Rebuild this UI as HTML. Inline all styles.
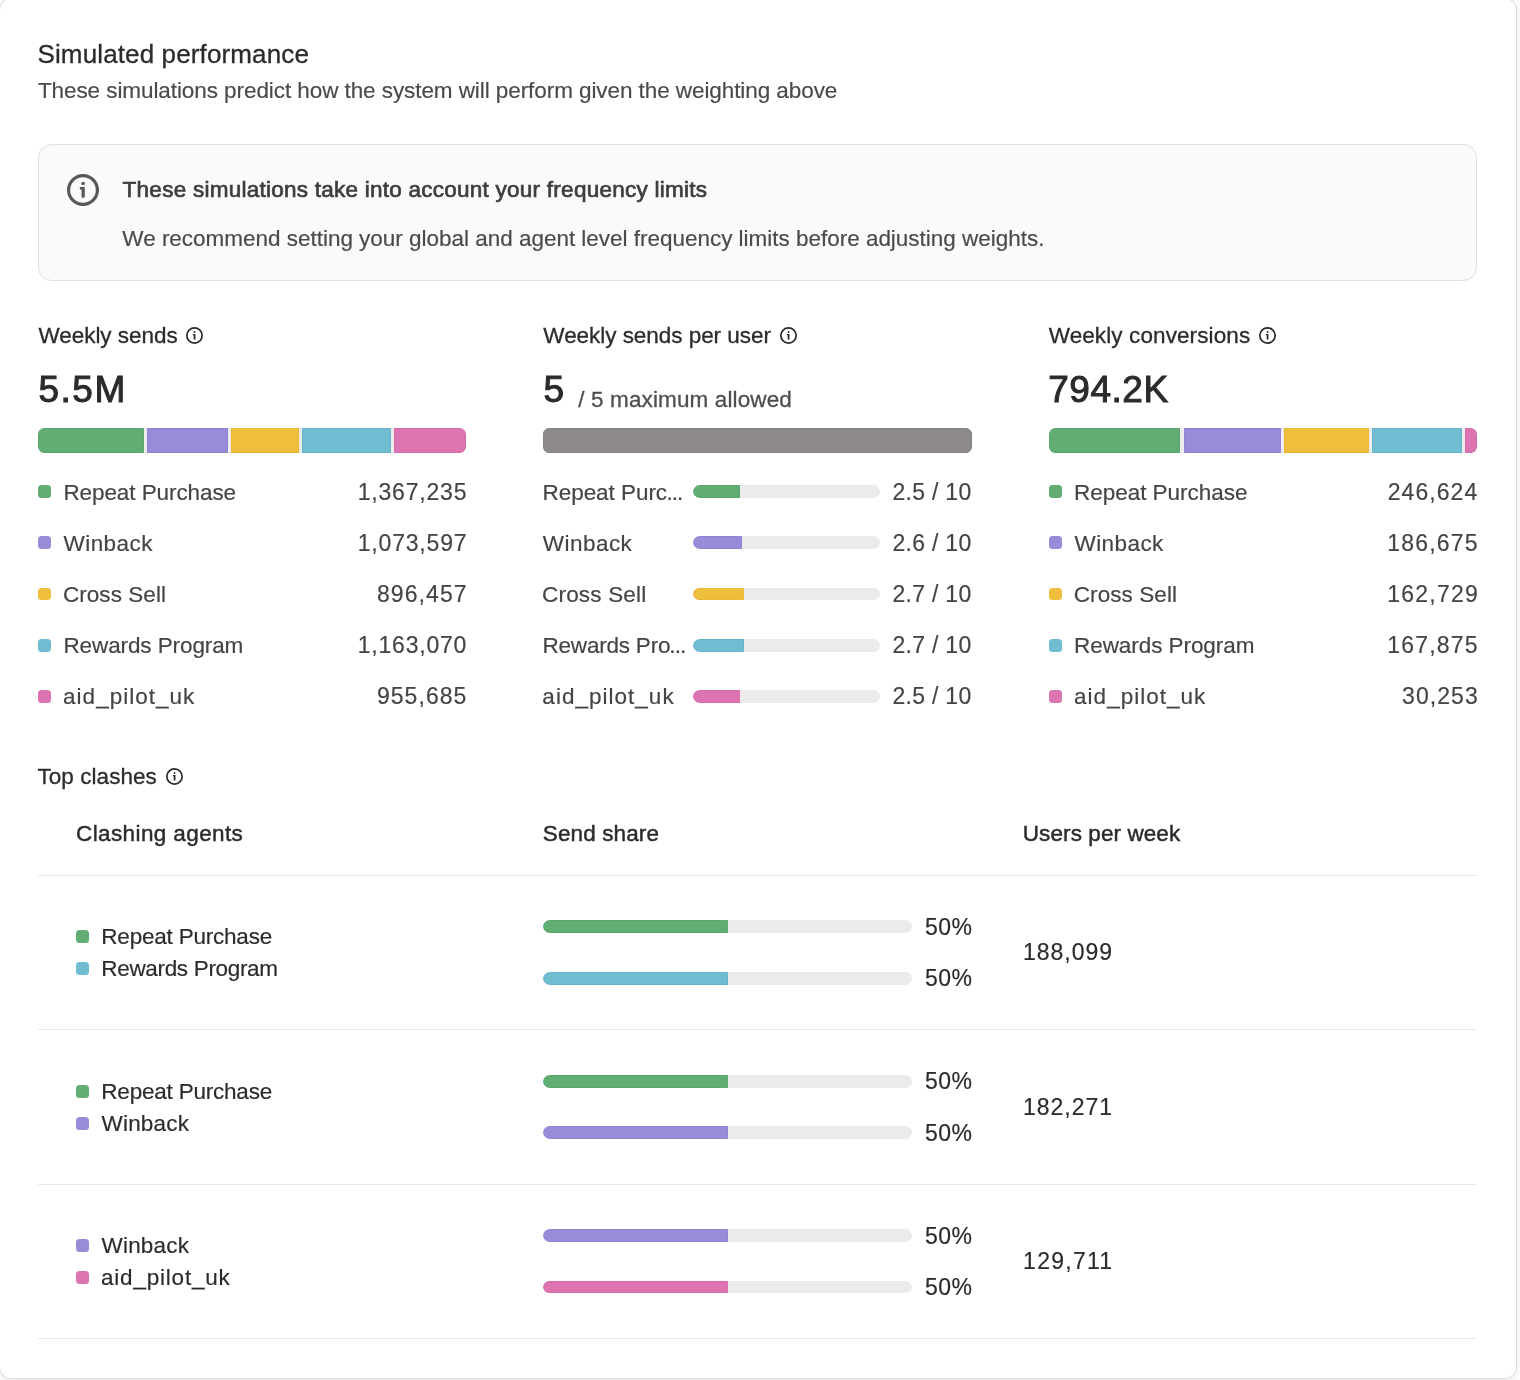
<!DOCTYPE html>
<html lang="en"><head><meta charset="utf-8"><title>Simulated performance</title>
<style>
html,body{margin:0;padding:0}
body{width:1520px;height:1380px;overflow:hidden;background:#fafafa;font-family:"Liberation Sans",sans-serif;position:relative}
.card{position:absolute;left:-1px;top:-2px;width:1516px;height:1379px;background:#fff;border:1.5px solid #dedcdc;border-radius:12px;box-shadow:0 1px 3px rgba(0,0,0,.06)}
.info{position:absolute;left:38px;top:144px;width:1439.1px;height:137.2px;box-sizing:border-box;background:#fafafa;border:1.3px solid #e1dfdf;border-radius:13.5px}
.t{position:absolute;white-space:pre;font-family:"Liberation Sans",sans-serif}
.dot{position:absolute;width:13px;height:13px;border-radius:3.5px}
.track{position:absolute;background:#ebebeb;border-radius:7px;overflow:hidden}
.fill{height:100%;box-sizing:border-box;border:1px solid;border-radius:7px 0 0 7px}
.stack{position:absolute;height:25px;background:#eeecee;border-radius:6px;overflow:hidden}
.seg{position:absolute;top:0;height:25px;box-sizing:border-box;border:1px solid}
.graybar{position:absolute;height:25px;box-sizing:border-box;background:#8e8a8b;border:1px solid #858182;border-radius:6px}
.hr{position:absolute;left:38px;width:1439px;height:1px;background:#e9e9e9}
.ic{position:absolute}
#txt{position:absolute;left:0;top:0;width:1520px;height:1380px;will-change:transform}
</style></head>
<body>
<div id="shapes"><div class="card"></div>
<div class="info"></div>
<div class="dot" style="left:38px;top:485px;height:13px;background:#62ad73"></div>
<div class="dot" style="left:1049px;top:485px;height:13px;background:#62ad73"></div>
<div class="track" style="left:692.8px;top:485px;width:187.5px;height:13px"><div class="fill" style="width:47.0px;background:#62ad73;border-color:#58a86a"></div></div>
<div class="dot" style="left:38px;top:536px;height:13px;background:#988cd9"></div>
<div class="dot" style="left:1049px;top:536px;height:13px;background:#988cd9"></div>
<div class="track" style="left:692.8px;top:536px;width:187.5px;height:13px"><div class="fill" style="width:49.3px;background:#988cd9;border-color:#9085d5"></div></div>
<div class="dot" style="left:38px;top:588px;height:12px;background:#efbe3c"></div>
<div class="dot" style="left:1049px;top:588px;height:12px;background:#efbe3c"></div>
<div class="track" style="left:692.8px;top:588px;width:187.5px;height:12px"><div class="fill" style="width:51.3px;background:#efbe3c;border-color:#ebb833"></div></div>
<div class="dot" style="left:38px;top:639px;height:13px;background:#70bcd1"></div>
<div class="dot" style="left:1049px;top:639px;height:13px;background:#70bcd1"></div>
<div class="track" style="left:692.8px;top:639px;width:187.5px;height:13px"><div class="fill" style="width:51.3px;background:#70bcd1;border-color:#65b6cc"></div></div>
<div class="dot" style="left:38px;top:690px;height:13px;background:#dc74b1"></div>
<div class="dot" style="left:1049px;top:690px;height:13px;background:#dc74b1"></div>
<div class="track" style="left:692.8px;top:690px;width:187.5px;height:13px"><div class="fill" style="width:47.0px;background:#dc74b1;border-color:#d86aab"></div></div>
<div class="stack" style="left:37.9px;top:428px;width:428.2px"><div class="seg" style="left:0.0px;width:105.9px;background:#62ad73;border-color:#58a86a;border-radius:6px 0 0 6px;"></div><div class="seg" style="left:109.1px;width:81.0px;background:#988cd9;border-color:#9085d5;"></div><div class="seg" style="left:193.0px;width:68.4px;background:#efbe3c;border-color:#ebb833;"></div><div class="seg" style="left:264.4px;width:88.8px;background:#70bcd1;border-color:#65b6cc;"></div><div class="seg" style="left:356.2px;width:72.0px;background:#dc74b1;border-color:#d86aab;border-radius:0 6px 6px 0;"></div></div>
<div class="stack" style="left:1049px;top:428px;width:428.2px"><div class="seg" style="left:0.0px;width:131.2px;background:#62ad73;border-color:#58a86a;border-radius:6px 0 0 6px;"></div><div class="seg" style="left:134.8px;width:97.4px;background:#988cd9;border-color:#9085d5;"></div><div class="seg" style="left:235.1px;width:84.9px;background:#efbe3c;border-color:#ebb833;"></div><div class="seg" style="left:323.0px;width:90.1px;background:#70bcd1;border-color:#65b6cc;"></div><div class="seg" style="left:416.1px;width:12.1px;background:#dc74b1;border-color:#d86aab;border-radius:0 6px 6px 0;"></div></div>
<div class="graybar" style="left:543.1px;top:428px;width:428.9px"></div>
<div class="hr" style="top:875px"></div>
<div class="dot" style="left:76px;top:930px;background:#62ad73"></div>
<div class="track" style="left:542.8px;top:920px;width:369.4px;height:13px"><div class="fill" style="width:185.2px;background:#62ad73;border-color:#58a86a"></div></div>
<div class="dot" style="left:76px;top:962px;background:#70bcd1"></div>
<div class="track" style="left:542.8px;top:972px;width:369.4px;height:12.5px"><div class="fill" style="width:185.2px;background:#70bcd1;border-color:#65b6cc"></div></div>
<div class="hr" style="top:1029px"></div>
<div class="dot" style="left:76px;top:1085px;background:#62ad73"></div>
<div class="track" style="left:542.8px;top:1075px;width:369.4px;height:13px"><div class="fill" style="width:185.2px;background:#62ad73;border-color:#58a86a"></div></div>
<div class="dot" style="left:76px;top:1117px;background:#988cd9"></div>
<div class="track" style="left:542.8px;top:1126px;width:369.4px;height:13px"><div class="fill" style="width:185.2px;background:#988cd9;border-color:#9085d5"></div></div>
<div class="hr" style="top:1184px"></div>
<div class="dot" style="left:76px;top:1239px;background:#988cd9"></div>
<div class="track" style="left:542.8px;top:1229px;width:369.4px;height:13px"><div class="fill" style="width:185.2px;background:#988cd9;border-color:#9085d5"></div></div>
<div class="dot" style="left:76px;top:1271px;background:#dc74b1"></div>
<div class="track" style="left:542.8px;top:1280.6px;width:369.4px;height:12.5px"><div class="fill" style="width:185.2px;background:#dc74b1;border-color:#d86aab"></div></div>
<div class="hr" style="top:1338px"></div>
<svg class="ic" style="left:182.90px;top:323.80px" width="23.00" height="23.00" viewBox="0 0 23.00 23.00"><circle cx="11.50" cy="11.50" r="7.65" fill="none" stroke="#2b2b2b" stroke-width="1.70"/><path d="M9.96 9.91 L12.46 9.91 L12.46 15.01 Q12.46 15.70 11.61 15.70 Q10.70 15.70 10.70 15.01 L10.70 11.23 L9.96 11.23 Q9.48 10.54 9.96 9.91 Z" fill="#2b2b2b"/><circle cx="11.55" cy="8.05" r="0.93" fill="#2b2b2b"/></svg>
<svg class="ic" style="left:776.70px;top:323.80px" width="23.00" height="23.00" viewBox="0 0 23.00 23.00"><circle cx="11.50" cy="11.50" r="7.65" fill="none" stroke="#2b2b2b" stroke-width="1.70"/><path d="M9.96 9.91 L12.46 9.91 L12.46 15.01 Q12.46 15.70 11.61 15.70 Q10.70 15.70 10.70 15.01 L10.70 11.23 L9.96 11.23 Q9.48 10.54 9.96 9.91 Z" fill="#2b2b2b"/><circle cx="11.55" cy="8.05" r="0.93" fill="#2b2b2b"/></svg>
<svg class="ic" style="left:1255.90px;top:323.80px" width="23.00" height="23.00" viewBox="0 0 23.00 23.00"><circle cx="11.50" cy="11.50" r="7.65" fill="none" stroke="#2b2b2b" stroke-width="1.70"/><path d="M9.96 9.91 L12.46 9.91 L12.46 15.01 Q12.46 15.70 11.61 15.70 Q10.70 15.70 10.70 15.01 L10.70 11.23 L9.96 11.23 Q9.48 10.54 9.96 9.91 Z" fill="#2b2b2b"/><circle cx="11.55" cy="8.05" r="0.93" fill="#2b2b2b"/></svg>
<svg class="ic" style="left:162.80px;top:764.70px" width="23.00" height="23.00" viewBox="0 0 23.00 23.00"><circle cx="11.50" cy="11.50" r="7.65" fill="none" stroke="#2b2b2b" stroke-width="1.70"/><path d="M9.96 9.91 L12.46 9.91 L12.46 15.01 Q12.46 15.70 11.61 15.70 Q10.70 15.70 10.70 15.01 L10.70 11.23 L9.96 11.23 Q9.48 10.54 9.96 9.91 Z" fill="#2b2b2b"/><circle cx="11.55" cy="8.05" r="0.93" fill="#2b2b2b"/></svg>
<svg class="ic" style="left:64.10px;top:171.10px" width="38.00" height="38.00" viewBox="0 0 38.00 38.00"><circle cx="19.00" cy="19.00" r="14.40" fill="none" stroke="#5c5757" stroke-width="3.20"/><path d="M16.10 16.00 L20.80 16.00 L20.80 25.60 Q20.80 26.90 19.20 26.90 Q17.50 26.90 17.50 25.60 L17.50 18.50 L16.10 18.50 Q15.20 17.20 16.10 16.00 Z" fill="#5c5757"/><circle cx="19.10" cy="12.50" r="1.75" fill="#5c5757"/></svg>
</div>
<div id="txt">
<span class="t" id="t0" style="left:37.50px;top:36.94px;font-size:26px;line-height:34px;color:#2b2b2b;letter-spacing:0.127px;-webkit-text-stroke:0.3px #2b2b2b;">Simulated performance</span>
<span class="t" id="t1" style="left:37.89px;top:76.30px;font-size:22.5px;line-height:29px;color:#4a4a4a;letter-spacing:-0.076px;-webkit-text-stroke:0.18px #4a4a4a;">These simulations predict how the system will perform given the weighting above</span>
<span class="t" id="t2" style="left:122.61px;top:175.30px;font-size:22.5px;line-height:29px;color:#3d3d3d;letter-spacing:0.251px;-webkit-text-stroke:0.7px #3d3d3d;">These simulations take into account your frequency limits</span>
<span class="t" id="t3" style="left:122.36px;top:223.80px;font-size:22.5px;line-height:29px;color:#4a4a4a;letter-spacing:-0.020px;-webkit-text-stroke:0.18px #4a4a4a;">We recommend setting your global and agent level frequency limits before adjusting weights.</span>
<span class="t" id="t4" style="left:38.39px;top:320.50px;font-size:22.5px;line-height:29px;color:#2b2b2b;letter-spacing:-0.025px;-webkit-text-stroke:0.3px #2b2b2b;">Weekly sends</span>
<span class="t" id="t5" style="left:543.35px;top:320.50px;font-size:22.5px;line-height:29px;color:#2b2b2b;letter-spacing:-0.044px;-webkit-text-stroke:0.3px #2b2b2b;">Weekly sends per user</span>
<span class="t" id="t6" style="left:1048.71px;top:320.50px;font-size:22.5px;line-height:29px;color:#2b2b2b;letter-spacing:0.104px;-webkit-text-stroke:0.3px #2b2b2b;">Weekly conversions</span>
<span class="t" id="t7" style="left:38.39px;top:366.13px;font-size:37px;line-height:48px;color:#2b2b2b;letter-spacing:1.558px;-webkit-text-stroke:1.0px #2b2b2b;">5.5M</span>
<span class="t" id="t8" style="left:543.39px;top:366.13px;font-size:37px;line-height:48px;color:#2b2b2b;letter-spacing:0.000px;-webkit-text-stroke:1.0px #2b2b2b;">5</span>
<span class="t" id="t9" style="left:578.33px;top:384.50px;font-size:22.5px;line-height:29px;color:#4e4e4e;letter-spacing:0.124px;-webkit-text-stroke:0.3px #4e4e4e;">/ 5 maximum allowed</span>
<span class="t" id="t10" style="left:1048.26px;top:366.13px;font-size:37px;line-height:48px;color:#2b2b2b;letter-spacing:0.514px;-webkit-text-stroke:1.0px #2b2b2b;">794.2K</span>
<span class="t" id="t11" style="left:63.41px;top:477.70px;font-size:22.5px;line-height:29px;color:#444;letter-spacing:-0.082px;-webkit-text-stroke:0.18px #444;">Repeat Purchase</span>
<span class="t" id="t12" style="left:357.72px;top:476.70px;font-size:23px;line-height:30px;color:#444;letter-spacing:0.808px;-webkit-text-stroke:0.18px #444;">1,367,235</span>
<span class="t" id="t13" style="left:1074.07px;top:477.70px;font-size:22.5px;line-height:29px;color:#444;letter-spacing:-0.037px;-webkit-text-stroke:0.18px #444;">Repeat Purchase</span>
<span class="t" id="t14" style="left:1387.77px;top:476.70px;font-size:23px;line-height:30px;color:#444;letter-spacing:1.047px;-webkit-text-stroke:0.18px #444;">246,624</span>
<span class="t" id="t15" style="left:542.54px;top:477.70px;font-size:22.5px;line-height:29px;color:#444;letter-spacing:-0.051px;-webkit-text-stroke:0.18px #444;">Repeat Purc</span>
<span class="t" id="t16" style="left:666.50px;top:477.70px;font-size:22.5px;line-height:29px;color:#444;letter-spacing:-1.045px;-webkit-text-stroke:0.18px #444;">...</span>
<span class="t" id="t17" style="left:892.52px;top:476.70px;font-size:23px;line-height:30px;color:#444;letter-spacing:0.283px;-webkit-text-stroke:0.18px #444;">2.5 / 10</span>
<span class="t" id="t18" style="left:63.54px;top:528.70px;font-size:22.5px;line-height:29px;color:#444;letter-spacing:0.445px;-webkit-text-stroke:0.18px #444;">Winback</span>
<span class="t" id="t19" style="left:357.72px;top:527.70px;font-size:23px;line-height:30px;color:#444;letter-spacing:0.813px;-webkit-text-stroke:0.18px #444;">1,073,597</span>
<span class="t" id="t20" style="left:1074.52px;top:528.70px;font-size:22.5px;line-height:29px;color:#444;letter-spacing:0.426px;-webkit-text-stroke:0.18px #444;">Winback</span>
<span class="t" id="t21" style="left:1387.24px;top:527.70px;font-size:23px;line-height:30px;color:#444;letter-spacing:1.188px;-webkit-text-stroke:0.18px #444;">186,675</span>
<span class="t" id="t22" style="left:542.76px;top:528.70px;font-size:22.5px;line-height:29px;color:#444;letter-spacing:0.472px;-webkit-text-stroke:0.18px #444;">Winback</span>
<span class="t" id="t23" style="left:892.52px;top:527.70px;font-size:23px;line-height:30px;color:#444;letter-spacing:0.283px;-webkit-text-stroke:0.18px #444;">2.6 / 10</span>
<span class="t" id="t24" style="left:62.94px;top:579.70px;font-size:22.5px;line-height:29px;color:#444;letter-spacing:0.052px;-webkit-text-stroke:0.18px #444;">Cross Sell</span>
<span class="t" id="t25" style="left:376.91px;top:578.70px;font-size:23px;line-height:30px;color:#444;letter-spacing:1.102px;-webkit-text-stroke:0.18px #444;">896,457</span>
<span class="t" id="t26" style="left:1073.77px;top:579.70px;font-size:22.5px;line-height:29px;color:#444;letter-spacing:0.075px;-webkit-text-stroke:0.18px #444;">Cross Sell</span>
<span class="t" id="t27" style="left:1387.24px;top:578.70px;font-size:23px;line-height:30px;color:#444;letter-spacing:1.221px;-webkit-text-stroke:0.18px #444;">162,729</span>
<span class="t" id="t28" style="left:542.09px;top:579.70px;font-size:22.5px;line-height:29px;color:#444;letter-spacing:0.177px;-webkit-text-stroke:0.18px #444;">Cross Sell</span>
<span class="t" id="t29" style="left:892.52px;top:578.70px;font-size:23px;line-height:30px;color:#444;letter-spacing:0.283px;-webkit-text-stroke:0.18px #444;">2.7 / 10</span>
<span class="t" id="t30" style="left:63.41px;top:630.70px;font-size:22.5px;line-height:29px;color:#444;letter-spacing:-0.097px;-webkit-text-stroke:0.18px #444;">Rewards Program</span>
<span class="t" id="t31" style="left:357.72px;top:629.70px;font-size:23px;line-height:30px;color:#444;letter-spacing:0.791px;-webkit-text-stroke:0.18px #444;">1,163,070</span>
<span class="t" id="t32" style="left:1074.07px;top:630.70px;font-size:22.5px;line-height:29px;color:#444;letter-spacing:-0.070px;-webkit-text-stroke:0.18px #444;">Rewards Program</span>
<span class="t" id="t33" style="left:1387.24px;top:629.70px;font-size:23px;line-height:30px;color:#444;letter-spacing:1.188px;-webkit-text-stroke:0.18px #444;">167,875</span>
<span class="t" id="t34" style="left:542.54px;top:630.70px;font-size:22.5px;line-height:29px;color:#444;letter-spacing:-0.215px;-webkit-text-stroke:0.18px #444;">Rewards Pro</span>
<span class="t" id="t35" style="left:669.32px;top:630.70px;font-size:22.5px;line-height:29px;color:#444;letter-spacing:-0.925px;-webkit-text-stroke:0.18px #444;">...</span>
<span class="t" id="t36" style="left:892.52px;top:629.70px;font-size:23px;line-height:30px;color:#444;letter-spacing:0.283px;-webkit-text-stroke:0.18px #444;">2.7 / 10</span>
<span class="t" id="t37" style="left:63.07px;top:681.70px;font-size:22.5px;line-height:29px;color:#444;letter-spacing:1.020px;-webkit-text-stroke:0.18px #444;">aid_pilot_uk</span>
<span class="t" id="t38" style="left:376.90px;top:680.70px;font-size:23px;line-height:30px;color:#444;letter-spacing:1.061px;-webkit-text-stroke:0.18px #444;">955,685</span>
<span class="t" id="t39" style="left:1074.07px;top:681.70px;font-size:22.5px;line-height:29px;color:#444;letter-spacing:1.020px;-webkit-text-stroke:0.18px #444;">aid_pilot_uk</span>
<span class="t" id="t40" style="left:1402.08px;top:680.70px;font-size:23px;line-height:30px;color:#444;letter-spacing:1.056px;-webkit-text-stroke:0.18px #444;">30,253</span>
<span class="t" id="t41" style="left:542.36px;top:681.70px;font-size:22.5px;line-height:29px;color:#444;letter-spacing:1.016px;-webkit-text-stroke:0.18px #444;">aid_pilot_uk</span>
<span class="t" id="t42" style="left:892.52px;top:680.70px;font-size:23px;line-height:30px;color:#444;letter-spacing:0.283px;-webkit-text-stroke:0.18px #444;">2.5 / 10</span>
<span class="t" id="t43" style="left:37.50px;top:761.70px;font-size:22.5px;line-height:29px;color:#2b2b2b;letter-spacing:0.052px;-webkit-text-stroke:0.3px #2b2b2b;">Top clashes</span>
<span class="t" id="t44" style="left:76.00px;top:818.70px;font-size:22.5px;line-height:29px;color:#2b2b2b;letter-spacing:0.393px;-webkit-text-stroke:0.45px #2b2b2b;">Clashing agents</span>
<span class="t" id="t45" style="left:542.82px;top:818.70px;font-size:22.5px;line-height:29px;color:#2b2b2b;letter-spacing:0.119px;-webkit-text-stroke:0.45px #2b2b2b;">Send share</span>
<span class="t" id="t46" style="left:1022.79px;top:818.70px;font-size:22.5px;line-height:29px;color:#2b2b2b;letter-spacing:0.087px;-webkit-text-stroke:0.45px #2b2b2b;">Users per week</span>
<span class="t" id="t47" style="left:101.29px;top:921.70px;font-size:22.5px;line-height:29px;color:#2b2b2b;letter-spacing:-0.208px;-webkit-text-stroke:0.18px #2b2b2b;">Repeat Purchase</span>
<span class="t" id="t48" style="left:924.98px;top:911.70px;font-size:23px;line-height:30px;color:#2b2b2b;letter-spacing:0.436px;-webkit-text-stroke:0.18px #2b2b2b;">50%</span>
<span class="t" id="t49" style="left:101.29px;top:953.70px;font-size:22.5px;line-height:29px;color:#2b2b2b;letter-spacing:-0.324px;-webkit-text-stroke:0.18px #2b2b2b;">Rewards Program</span>
<span class="t" id="t50" style="left:924.98px;top:962.70px;font-size:23px;line-height:30px;color:#2b2b2b;letter-spacing:0.436px;-webkit-text-stroke:0.18px #2b2b2b;">50%</span>
<span class="t" id="t51" style="left:1023.08px;top:936.70px;font-size:23px;line-height:30px;color:#2b2b2b;letter-spacing:0.970px;-webkit-text-stroke:0.18px #2b2b2b;">188,099</span>
<span class="t" id="t52" style="left:101.29px;top:1076.70px;font-size:22.5px;line-height:29px;color:#2b2b2b;letter-spacing:-0.208px;-webkit-text-stroke:0.18px #2b2b2b;">Repeat Purchase</span>
<span class="t" id="t53" style="left:924.98px;top:1065.70px;font-size:23px;line-height:30px;color:#2b2b2b;letter-spacing:0.436px;-webkit-text-stroke:0.18px #2b2b2b;">50%</span>
<span class="t" id="t54" style="left:101.56px;top:1108.70px;font-size:22.5px;line-height:29px;color:#2b2b2b;letter-spacing:0.188px;-webkit-text-stroke:0.18px #2b2b2b;">Winback</span>
<span class="t" id="t55" style="left:924.98px;top:1117.70px;font-size:23px;line-height:30px;color:#2b2b2b;letter-spacing:0.436px;-webkit-text-stroke:0.18px #2b2b2b;">50%</span>
<span class="t" id="t56" style="left:1023.08px;top:1091.70px;font-size:23px;line-height:30px;color:#2b2b2b;letter-spacing:0.967px;-webkit-text-stroke:0.18px #2b2b2b;">182,271</span>
<span class="t" id="t57" style="left:101.56px;top:1230.70px;font-size:22.5px;line-height:29px;color:#2b2b2b;letter-spacing:0.188px;-webkit-text-stroke:0.18px #2b2b2b;">Winback</span>
<span class="t" id="t58" style="left:924.98px;top:1220.70px;font-size:23px;line-height:30px;color:#2b2b2b;letter-spacing:0.436px;-webkit-text-stroke:0.18px #2b2b2b;">50%</span>
<span class="t" id="t59" style="left:100.98px;top:1262.70px;font-size:22.5px;line-height:29px;color:#2b2b2b;letter-spacing:0.796px;-webkit-text-stroke:0.18px #2b2b2b;">aid_pilot_uk</span>
<span class="t" id="t60" style="left:924.98px;top:1271.70px;font-size:23px;line-height:30px;color:#2b2b2b;letter-spacing:0.436px;-webkit-text-stroke:0.18px #2b2b2b;">50%</span>
<span class="t" id="t61" style="left:1023.08px;top:1245.70px;font-size:23px;line-height:30px;color:#2b2b2b;letter-spacing:1.268px;-webkit-text-stroke:0.18px #2b2b2b;">129,711</span>
</div>
</body></html>
